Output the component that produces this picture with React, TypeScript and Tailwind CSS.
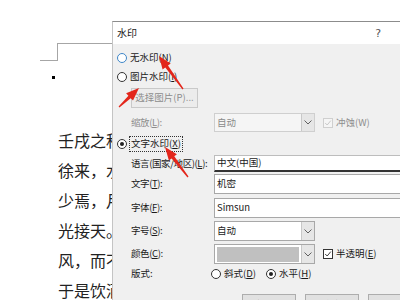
import React from "react";

const DOC_LINES = ["壬戌之秋，七月既望", "徐来，水波不兴", "少焉，月出于东山之上", "光接天。纵一苇之所如", "风，而不知其所止", "于是饮酒乐甚"];

// red annotation arrows: tail -> tip
const ARROWS = [
  { x1: 183, y1: 89, x2: 159, y2: 56 },
  { x1: 119, y1: 107, x2: 139, y2: 88 },
  { x1: 188, y1: 177, x2: 165, y2: 147 },
];

function arrowPoints(a: { x1: number; y1: number; x2: number; y2: number }) {
  const dx = a.x2 - a.x1;
  const dy = a.y2 - a.y1;
  const len = Math.hypot(dx, dy);
  const ux = dx / len;
  const uy = dy / len;
  const nx = -uy;
  const ny = ux;
  const head = 13;
  const bx = a.x2 - ux * head;
  const by = a.y2 - uy * head;
  const pts = [
    [a.x1 + nx * 0.6, a.y1 + ny * 0.6],
    [bx + nx * 1.7, by + ny * 1.7],
    [bx + nx * 5, by + ny * 5],
    [a.x2, a.y2],
    [bx - nx * 5, by - ny * 5],
    [bx - nx * 1.7, by - ny * 1.7],
    [a.x1 - nx * 0.6, a.y1 - ny * 0.6],
  ];
  return pts.map((p) => p.map((v) => v.toFixed(1)).join(",")).join(" ");
}

function Chevron() {
  return (
    <svg width="8" height="5" viewBox="0 0 8 5" className="text-[#606060]">
      <path d="M0.5 0.5 L4 4 L7.5 0.5" fill="none" stroke="currentColor" strokeWidth="1" />
    </svg>
  );
}

function Check({ color }: { color: string }) {
  return (
    <svg width="10" height="10" viewBox="0 0 10 10">
      <path d="M1.5 5 L4 7.5 L8.5 2" fill="none" stroke={color} strokeWidth="1.1" />
    </svg>
  );
}

function Label({ text, k, disabled }: { text: string; k?: string; disabled?: boolean }) {
  return (
    <div
      className={`w-[83px] shrink-0 whitespace-nowrap tracking-[-0.4px] ${disabled ? "text-[#8d8d8d]" : "text-[#1a1a1a]"}`}
    >
      {text}
      {k && (
        <>
          (<span className="underline">{k}</span>):
        </>
      )}
    </div>
  );
}

function Select({ value, disabled, swatch }: { value?: string; disabled?: boolean; swatch?: boolean }) {
  return (
    <div
      className={`flex h-full w-[101px] border ${disabled ? "border-[#cfcfcf] bg-[#f5f5f5]" : "border-[#a8a8a8] bg-white"}`}
    >
      <div className="flex flex-1 items-center px-[2px]">
        {swatch ? (
          <div className="h-[15px] w-full bg-[#c0c0c0]" />
        ) : (
          <span className={disabled ? "text-[#8a8a8a]" : "text-[#1a1a1a]"}>{value}</span>
        )}
      </div>
      <div className="flex w-[13px] items-center justify-center border-l border-[#c8c8c8] bg-[#e6e6e6]">
        <Chevron />
      </div>
    </div>
  );
}

export default function App() {
  return (
    <div className="relative h-[300px] w-[400px] overflow-hidden bg-white font-['Noto_Sans_CJK_SC',sans-serif]">
      <div className="flex h-full items-start">
        {/* document page behind the dialog */}
        <div className="h-full w-[112px] shrink-0 overflow-hidden">
          <div className="ml-[40px] mt-[43px] flex">
            <div className="h-[18px] w-[17px] border-b border-[#a6a6a6]" />
            <div className="h-[18px] flex-1 border-l border-t border-[#a6a6a6]" />
          </div>
          <div className="ml-[52px] mt-[15px] h-[3px] w-[3px] bg-black" />
          <div className="mt-[46px] pl-[58px] text-[16px] leading-[30px] text-[#222]">
            {DOC_LINES.map((l) => (
              <div key={l} className="whitespace-nowrap">
                {l}
              </div>
            ))}
          </div>
        </div>

        {/* 水印 dialog */}
        <div className="mt-[21px] w-[310px] shrink-0 border-l border-t border-l-[#c4c4c4] border-t-[#8c8c8c] text-[9.5px] leading-none">
          <div className="flex h-[22px] items-center justify-between bg-white pl-[4px] pr-[41px] text-[10px] text-[#222]">
            <span>水印</span>
            <span className="font-['DejaVu_Sans',sans-serif] text-[11px] text-[#555]">?</span>
          </div>
          <div className="h-[260px] bg-[#f0f0f0] pl-[4px] pt-[5px]">
            <div className="flex h-[18px] items-center">
              <div className="h-[10px] w-[10px] rounded-full border border-[#3e86c8] bg-white" />
              <span className="ml-[3px] text-[#1a1a1a]">
                无水印(<span className="underline">N</span>)
              </span>
            </div>
            <div className="mt-[1px] flex h-[18px] items-center">
              <div className="h-[10px] w-[10px] rounded-full border border-[#333] bg-white" />
              <span className="ml-[3px] text-[#1a1a1a]">
                图片水印(<span className="underline">I</span>)
              </span>
            </div>
            <div className="ml-[14px] mt-[2px] flex h-[20px] w-[67px] items-center justify-center border border-[#c9c9c9] bg-[#ececec] text-[#8d8d8d]">
              选择图片(P)...
            </div>
            <div className="mt-[5px] flex h-[19px] items-center pl-[14px]">
              <Label text="缩放" k="L" disabled />
              <Select value="自动" disabled />
              <div className="ml-[8px] flex h-[10px] w-[10px] items-center justify-center border border-[#cfcfcf] bg-[#f5f5f5]">
                <Check color="#c2c2c2" />
              </div>
              <span className="ml-[3px] text-[#8d8d8d]">冲蚀(W)</span>
            </div>
            <div className="mt-[3px] flex h-[18px] items-center">
              <div className="flex h-[10px] w-[10px] items-center justify-center rounded-full border border-[#333] bg-white">
                <div className="h-[4px] w-[4px] rounded-full bg-[#222]" />
              </div>
              <span className="ml-[2px] border border-dotted border-[#333] px-[1px] py-[2px] text-[#1a1a1a]">
                文字水印(<span className="underline">X</span>)
              </span>
            </div>
            <div className="mt-[2px] flex h-[17px] items-center pl-[14px]">
              <Label text="语言(国家/地区)" k="L" />
              <div className="flex h-full flex-1 items-center border border-b-2 border-[#bdbdbd] border-b-[#333] bg-white px-[2px] text-[#1a1a1a]">
                中文(中国)
              </div>
            </div>
            <div className="mt-[2px] flex h-[20px] items-center pl-[14px]">
              <Label text="文字" k="T" />
              <div className="flex h-full flex-1 items-center border border-[#a8a8a8] bg-white px-[2px] text-[#1a1a1a]">
                机密
              </div>
            </div>
            <div className="mt-[4px] flex h-[20px] items-center pl-[14px]">
              <Label text="字体" k="F" />
              <div className="flex h-full flex-1 items-center border border-[#a8a8a8] bg-white px-[2px] text-[#1a1a1a]">
                Simsun
              </div>
            </div>
            <div className="mt-[3px] flex h-[20px] items-center pl-[14px]">
              <Label text="字号" k="S" />
              <Select value="自动" />
            </div>
            <div className="mt-[3px] flex h-[20px] items-center pl-[14px]">
              <Label text="颜色" k="C" />
              <Select swatch />
              <div className="ml-[8px] flex h-[10px] w-[10px] items-center justify-center border border-[#333] bg-white">
                <Check color="#222" />
              </div>
              <span className="ml-[3px] text-[#1a1a1a]">
                半透明(<span className="underline">E</span>)
              </span>
            </div>
            <div className="mt-[2px] flex h-[16px] items-center pl-[14px]">
              <div className="w-[83px] shrink-0 text-[#1a1a1a]">版式:</div>
              <div className="-ml-[3px] h-[10px] w-[10px] rounded-full border border-[#333] bg-white" />
              <span className="ml-[3px] text-[#1a1a1a]">
                斜式(<span className="underline">D</span>)
              </span>
              <div className="ml-[10px] flex h-[10px] w-[10px] items-center justify-center rounded-full border border-[#333] bg-white">
                <div className="h-[4px] w-[4px] rounded-full bg-[#222]" />
              </div>
              <span className="ml-[3px] text-[#1a1a1a]">
                水平(<span className="underline">H</span>)
              </span>
            </div>
            <div className="ml-[125px] mt-[12px] flex gap-[9px]">
              {["应用(A)", "确定", "取消"].map((b) => (
                <div
                  key={b}
                  className="flex h-[22px] w-[55px] items-center justify-center border border-[#adadad] bg-[#e1e1e1] text-[#1a1a1a]"
                >
                  {b}
                </div>
              ))}
            </div>
          </div>
        </div>
      </div>

      <svg className="pointer-events-none absolute inset-0" width="400" height="300">
        {ARROWS.map((a, i) => (
          <polygon key={i} points={arrowPoints(a)} fill="#e3261b" />
        ))}
      </svg>
    </div>
  );
}
